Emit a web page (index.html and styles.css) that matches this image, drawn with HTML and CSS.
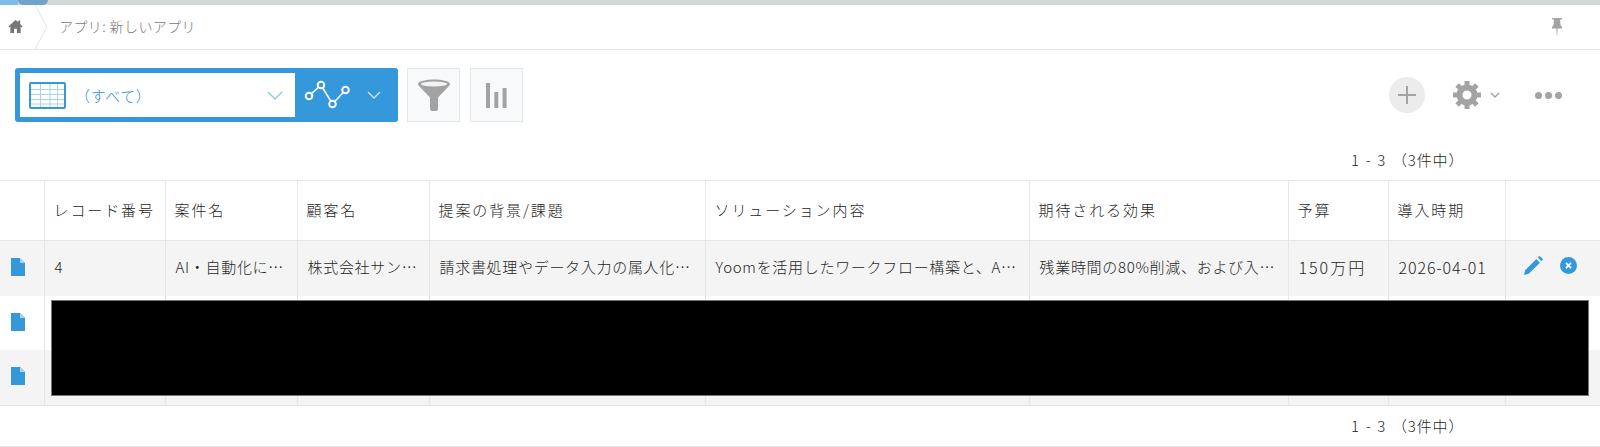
FILE: index.html
```html
<!DOCTYPE html>
<html lang="ja">
<head>
    <meta charset="UTF-8">
    <title>アプリ: 新しいアプリ</title>
    <link rel="stylesheet" href="styles.css">
</head>
<body>
    <div class="top-bar"><span class="top-bar-tab"><span class="top-bar-tab-dark"></span></span></div>

    <!-- breadcrumb -->
    <div class="breadcrumb">
        <a class="home-link">
            <svg width="15" height="15" viewBox="0 0 16 16"><path fill="#777" d="M8 1 .5 8l1 1L2.500 8.100V15h4v-4.500h3V15h4V8.100l1 .9 1-1L13 5.200V1.500h-2v1.800z"/></svg>
        </a>
        <svg class="crumb-arrow" width="14" height="44" viewBox="0 0 14 44"><path fill="none" stroke="#e3e5e5" d="M1 0 13 22 1 44"/></svg>
        <span class="crumb-text">アプリ: 新しいアプリ</span>
        <svg class="pin" width="10" height="18" viewBox="0 0 10 18"><path fill="#a3a3a3" d="M0 0h10v1.500H8l.5 5.500 1.500 2v1.500H5.600L5.200 18h-.4l-.4-7.500H0V9l1.500-2L2 1.500H0z"/></svg>
    </div>

    <!-- toolbar -->
    <div class="toolbar">
        <div class="view-select">
            <div class="view-name">
                <svg width="37" height="27" viewBox="0 0 37 27">
                    <rect x="1" y="1" width="35" height="25" rx="1" fill="#fff" stroke="#3498db" stroke-width="2"/>
                    <path stroke="#a9d3f0" fill="none" d="M2 7.500h33M2 12.500h33M2 17.500h33M2 22h33M11.500 2v23M21 2v23M28.500 2v23"/>
                </svg>
                <span class="view-label">（すべて）</span>
                <svg class="view-caret" width="16" height="9" viewBox="0 0 16 9"><path fill="none" stroke="#8cc3ea" stroke-width="1.300" d="M1 1l7 7 7-7"/></svg>
            </div>
            <div class="graph-part">
                <svg width="48" height="32" viewBox="0 0 48 32">
                    <path fill="none" stroke="#fff" stroke-width="1.600" d="M5 17 17 6l11.500 19 13-14"/>
                    <g fill="#3498db" stroke="#fff" stroke-width="2"><circle cx="5" cy="17" r="3.300"/><circle cx="17" cy="6" r="3.300"/><circle cx="28.500" cy="25" r="3.300"/><circle cx="41.500" cy="11" r="3.300"/></g>
                </svg>
                <svg width="14" height="8" viewBox="0 0 14 8"><path fill="none" stroke="#cfe6f7" stroke-width="1.300" d="M1 1l6 6 6-6"/></svg>
            </div>
        </div>
        <button class="tool-btn filter-btn">
            <svg width="32" height="32" viewBox="0 0 32 32">
                <path fill="#a3a3a3" d="M0 5C0 2 8 .5 16 .5S32 2 32 5c0 1-1 2-2 3L20 18.500V30a2 2 0 0 1-2 2h-4a2 2 0 0 1-2-2V18.500L2 8C1 7 0 6 0 5z"/>
                <ellipse cx="16" cy="5" rx="13" ry="2.600" fill="#f2f3f4"/>
            </svg>
        </button>
        <button class="tool-btn chart-btn">
            <svg width="21" height="25" viewBox="0 0 21 25"><path fill="#a3a3a3" d="M0 0h4v25H0zM8.300 9h4v16h-4zM16.600 5h4v20h-4z"/></svg>
        </button>
        <div class="toolbar-right">
            <button class="add-btn">
                <svg width="20" height="20" viewBox="0 0 20 20"><path stroke="#a3a3a3" stroke-width="2" d="M10 1v18M1 10h18"/></svg>
            </button>
            <svg class="gear" width="28" height="28" viewBox="0 0 28 28">
                <circle cx="14" cy="14" r="7.500" fill="none" stroke="#a3a3a3" stroke-width="6"/>
                <path stroke="#a3a3a3" stroke-width="5" d="M14 0v5M14 23v5M0 14h5M23 14h5M4.100 4.100l3.500 3.500M20.400 20.400l3.500 3.500M4.100 23.900l3.500-3.500M20.400 7.600l3.500-3.500"/>
            </svg>
            <svg class="gear-caret" width="10" height="7" viewBox="0 0 10 7"><path fill="none" stroke="#a3a3a3" stroke-width="1.500" d="M1 1l4 4 4-4"/></svg>
            <div class="more"><i></i><i></i><i></i></div>
        </div>
    </div>

    <div class="pager pager-top">1 - 3 （3件中）</div>

    <div class="table-wrap">
        <table class="records">
            <colgroup>
                <col class="c-icon"><col class="c-no"><col class="c-name"><col class="c-client"><col class="c-bg"><col class="c-sol"><col class="c-effect"><col class="c-budget"><col class="c-date"><col>
            </colgroup>
            <thead>
                <tr>
                    <th></th>
                    <th>レコード番号</th>
                    <th>案件名</th>
                    <th>顧客名</th>
                    <th>提案の背景/課題</th>
                    <th>ソリューション内容</th>
                    <th>期待される効果</th>
                    <th>予算</th>
                    <th>導入時期</th>
                    <th></th>
                </tr>
            </thead>
            <tbody>
                <tr>
                    <td class="doc"><svg width="14" height="18" viewBox="0 0 14 18"><path fill="#3498db" d="M0 0h9l5 5v13H0z"/><path fill="#a9d3f0" d="M9 0l5 5H9z"/></svg></td>
                    <td>4</td>
                    <td>AI・自動化に…</td>
                    <td>株式会社サン…</td>
                    <td>請求書処理やデータ入力の属人化…</td>
                    <td>Yoomを活用したワークフロー構築と、A…</td>
                    <td>残業時間の80%削減、および入…</td>
                    <td class="budget">150万円</td>
                    <td class="date">2026-04-01</td>
                    <td class="actions">
                        <div class="row-actions">
                            <svg width="19" height="19" viewBox="0 0 20 20"><path fill="#3498db" d="M0 20l1.200-5L13 3.200 16.800 7 5 18.800zM14.500 1.700l1.200-1.200a1 1 0 0 1 1.400 0l2.400 2.400a1 1 0 0 1 0 1.400l-1.200 1.200z"/></svg>
                            <svg width="17" height="17" viewBox="0 0 18 18"><circle cx="9" cy="9" r="9" fill="#3498db"/><path stroke="#fff" stroke-width="1.800" d="M6.300 6.300l5.400 5.400M11.700 6.300l-5.400 5.400"/></svg>
                        </div>
                    </td>
                </tr>
                <tr>
                    <td class="doc"><svg width="14" height="18" viewBox="0 0 14 18"><path fill="#3498db" d="M0 0h9l5 5v13H0z"/><path fill="#a9d3f0" d="M9 0l5 5H9z"/></svg></td>
                    <td></td><td></td><td></td><td></td><td></td><td></td><td></td><td></td><td></td>
                </tr>
                <tr>
                    <td class="doc"><svg width="14" height="18" viewBox="0 0 14 18"><path fill="#3498db" d="M0 0h9l5 5v13H0z"/><path fill="#a9d3f0" d="M9 0l5 5H9z"/></svg></td>
                    <td></td><td></td><td></td><td></td><td></td><td></td><td></td><td></td><td></td>
                </tr>
            </tbody>
        </table>
        <!-- blacked out rows -->
        <div class="redact"></div>
    </div>

    <div class="pager pager-bottom">1 - 3 （3件中）</div>
</body>
</html>
```

FILE: styles.css
```css
body {
    margin: 0;
    height: 447px;
    overflow: hidden;
    background-color: #fff;
    color: #1f1f1f;
    font-family: "Noto Sans CJK JP", "Noto Sans", sans-serif;
    font-size: 15px;
    font-weight: 300;
}

.top-bar {
    height: 5px;
    background-color: #d4d7d7;
}

.top-bar-tab {
    display: block;
    width: 18px;
    height: 5px;
    background-color: #7dbde9;
}

.top-bar-tab-dark {
    display: block;
    width: 30px;
    height: 5px;
    margin-left: 18px;
    border-radius: 0 0 5px 5px;
    background-color: #6fa3c8;
}

.breadcrumb {
    display: flex;
    align-items: center;
    height: 44px;
    border-bottom: 1px solid #e3e5e5;
}

.home-link {
    display: flex;
    width: 30px;
    justify-content: center;
    margin-right: 4px;
    margin-top: -2px;
}

.crumb-arrow {
    flex-shrink: 0;
}

.crumb-text {
    margin-left: 11px;
    margin-top: -3px;
    font-size: 14px;
    letter-spacing: .4px;
    color: #777;
}

.pin {
    margin-left: auto;
    margin-right: 38px;
}

.toolbar {
    display: flex;
    align-items: center;
    height: 54px;
    margin-top: 18px;
    padding-left: 15px;
    padding-right: 38px;
}

.view-select {
    display: flex;
    width: 383px;
    height: 54px;
    box-sizing: border-box;
    padding: 5px;
    border-radius: 3px;
    background-color: #3498db;
}

.view-name {
    display: flex;
    align-items: center;
    width: 275px;
    padding-left: 9px;
    padding-right: 12px;
    box-sizing: border-box;
    background-color: #fff;
}

.view-label {
    margin-left: 9px;
    color: #2f8fd6;
    font-size: 15px;
    letter-spacing: .6px;
}

.view-caret {
    margin-left: auto;
}

.graph-part {
    display: flex;
    align-items: center;
    gap: 15px;
    padding-left: 9px;
}

.tool-btn {
    display: flex;
    align-items: center;
    justify-content: center;
    width: 53px;
    height: 54px;
    padding: 0;
    box-sizing: border-box;
    border: 1px solid #e3e7e8;
    background-color: #f7f9fa;
}

.filter-btn {
    margin-left: 9px;
}

.chart-btn {
    margin-left: 10px;
}

.toolbar-right {
    display: flex;
    align-items: center;
    margin-left: auto;
}

.add-btn {
    display: flex;
    align-items: center;
    justify-content: center;
    width: 36px;
    height: 36px;
    padding: 0;
    border: none;
    border-radius: 50%;
    background-color: #ececec;
}

.gear {
    margin-left: 28px;
}

.gear-caret {
    margin-left: 9px;
}

.more {
    display: flex;
    gap: 3px;
    margin-left: 35px;
}

.more i {
    width: 7px;
    height: 7px;
    border-radius: 50%;
    background-color: #a3a3a3;
}

.pager {
    padding-left: 1351px;
    line-height: 30px;
    letter-spacing: .9px;
    word-spacing: 1.500px;
    white-space: nowrap;
}

.pager-top {
    height: 35px;
    padding-top: 23px;
}

.pager-bottom {
    height: 35px;
    padding-top: 5px;
    border-bottom: 1px solid #e3e5e5;
}

.table-wrap {
    position: relative;
}

.records {
    width: 100%;
    border-collapse: collapse;
    table-layout: fixed;
    border-top: 1px solid #e3e7e8;
    border-bottom: 1px solid #e3e7e8;
}

.c-icon { width: 44px; }
.c-no { width: 121px; }
.c-name { width: 132px; }
.c-client { width: 132px; }
.c-bg { width: 276px; }
.c-sol { width: 324px; }
.c-effect { width: 259px; }
.c-budget { width: 100px; }
.c-date { width: 117px; }

.records th {
    height: 57px;
    padding: 0 0 2px 9px;
    border-left: 1px solid #e3e7e8;
    border-bottom: 1px solid #e3e7e8;
    text-align: left;
    font-weight: 300;
    letter-spacing: 1.900px;
    white-space: nowrap;
}

.records td {
    height: 51.700px;
    padding: 0 0 3px 10px;
    border-left: 1px solid #e3e7e8;
    letter-spacing: .7px;
    white-space: nowrap;
    overflow: hidden;
}

.records th:first-child,
.records td:first-child {
    border-left: none;
}

.records tbody tr:nth-child(odd) {
    background-color: #f4f4f4;
}

.records td.doc {
    padding-left: 11px;
}

.doc svg {
    display: block;
}

.records td.budget {
    font-size: 16px;
    letter-spacing: 2px;
}

.records td.date {
    font-size: 16px;
    letter-spacing: .9px;
}

.records td.actions {
    padding-left: 18px;
}

.row-actions {
    display: flex;
    align-items: center;
    gap: 17px;
    margin-top: -2px;
}

.redact {
    position: absolute;
    left: 51px;
    top: 120px;
    width: 1538px;
    height: 96px;
    box-sizing: border-box;
    background-color: #000;
    border: 1px solid #777;
}
```
